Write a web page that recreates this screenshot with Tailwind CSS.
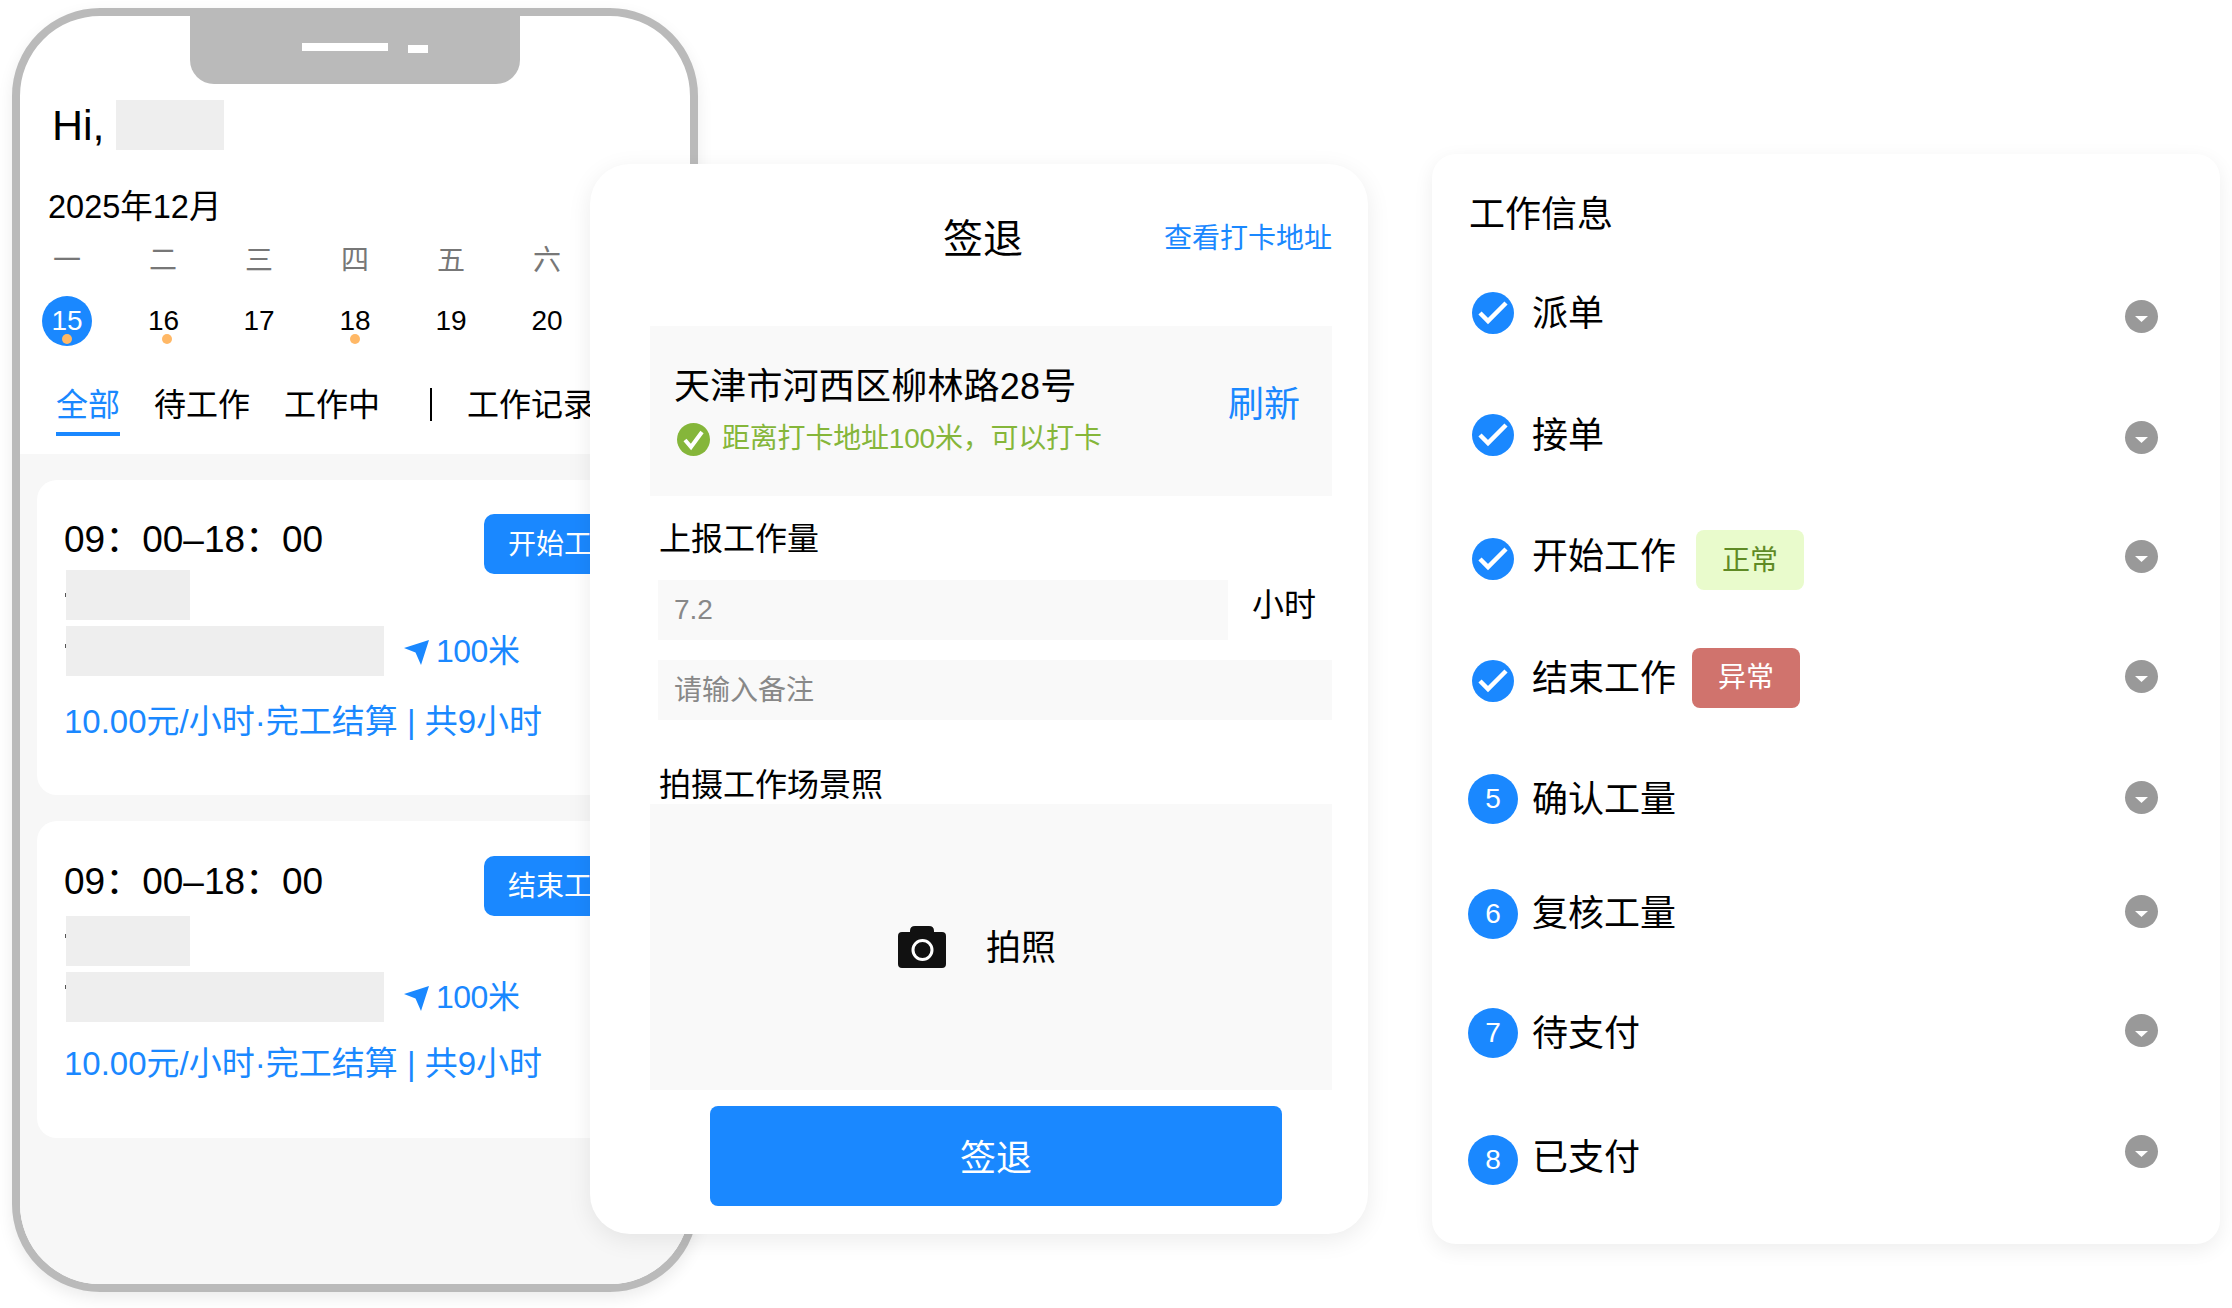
<!DOCTYPE html>
<html lang="zh-CN">
<head>
<meta charset="utf-8">
<title>工作信息</title>
<script src="https://cdn.jsdelivr.net/npm/@tailwindcss/browser@4"></script>
</head>
<body class="bg-white">
<div class="relative w-[2232px] h-[1308px] overflow-hidden bg-white text-black font-['Liberation_Sans','Noto_Sans_CJK_SC',sans-serif]">
  <div class="flex items-start pt-[8px] pl-[12px]">
    <!-- phone -->
    <section class="w-[686px] h-[1284px] shrink-0 border-[8px] border-[#bababa] rounded-[88px] overflow-hidden bg-white flex flex-col shadow-[0_6px_16px_rgba(0,0,0,0.08)]">
      <div class="ml-[170px] w-[330px] h-[68px] shrink-0 bg-[#bababa] rounded-b-[24px] flex items-start gap-[20px] pl-[112px] pt-[27px]">
        <span class="w-[86px] h-[8px] bg-white"></span>
        <span class="w-[20px] h-[8px] mt-[2px] bg-white"></span>
      </div>
      <div class="mt-[16px] h-[50px] shrink-0 pl-[32px] flex items-center gap-[11px]">
        <span class="text-[43px] leading-[50px]">Hi,</span>
        <span class="w-[108px] h-[50px] bg-[#eeeeee]"></span>
      </div>
      <div class="mt-[37px] h-[39px] shrink-0 pl-[28px] text-[32.500px] leading-[40px]">2025年12月</div>
      <div class="mt-[15px] h-[40px] shrink-0 flex -ml-[1px] text-[28px] leading-[40px] text-[#777777]">
        <span class="w-[96px] text-center">一</span>
        <span class="w-[96px] text-center">二</span>
        <span class="w-[96px] text-center">三</span>
        <span class="w-[96px] text-center">四</span>
        <span class="w-[96px] text-center">五</span>
        <span class="w-[96px] text-center">六</span>
      </div>
      <div class="mt-[15px] h-[50px] shrink-0 flex -ml-[1px] text-[28px] leading-[50px]">
        <span class="relative w-[96px] flex justify-center">
          <span class="w-[50px] h-[50px] rounded-full bg-[#1a88ff] text-white text-center">15</span>
          <span class="absolute left-[43px] top-[38px] w-[10px] h-[10px] rounded-full bg-[#ffb866]"></span>
        </span>
        <span class="relative w-[96px] text-center pl-[1px]">16<span class="absolute left-[47px] top-[38px] w-[10px] h-[10px] rounded-full bg-[#ffb866]"></span></span>
        <span class="w-[96px] text-center">17</span>
        <span class="relative w-[96px] text-center">18<span class="absolute left-[43px] top-[38px] w-[10px] h-[10px] rounded-full bg-[#ffb866]"></span></span>
        <span class="w-[96px] text-center">19</span>
        <span class="w-[96px] text-center">20</span>
      </div>
      <nav class="mt-[34px] h-[56px] shrink-0 pl-[36px] flex items-start text-[32px] leading-[50px] whitespace-nowrap">
        <span class="w-[64px] h-[56px] border-b-[4px] border-[#1a88ff] text-[#1a88ff] text-center">全部</span>
        <span class="ml-[34px]">待工作</span>
        <span class="ml-[34px]">工作中</span>
        <span class="ml-[50px] mt-[8px] w-[2px] h-[33px] bg-black"></span>
        <span class="ml-[35px]">工作记录</span>
      </nav>
      <div class="mt-[18px] flex-1 bg-[#f7f7f7] pt-[26px] pl-[17px] flex flex-col gap-[26px]">
        <article class="w-[640px] h-[315px] shrink-0 bg-white rounded-[20px] pt-[34px] pl-[28px]">
          <div class="h-[56px] flex items-start">
            <span class="-ml-[1px] w-[420px] text-[37px] leading-[52px] whitespace-nowrap">09：00–18：00</span>
            <span class="w-[160px] h-[60px] rounded-[10px] bg-[#1a88ff] text-white text-[28px] leading-[62px] pl-[24px]">开始工作</span>
          </div>
          <div class="flex items-center h-[50px]">
            <span class="w-[1px] h-[4px] bg-[#555555]"></span>
            <span class="w-[124px] h-[50px] bg-[#eeeeee]"></span>
          </div>
          <div class="mt-[6px] h-[50px] flex items-center">
            <span class="w-[1px] h-[4px] mb-[10px] bg-[#555555]"></span>
            <span class="w-[318px] h-[50px] bg-[#eeeeee]"></span>
            <svg class="ml-[20px] mt-[2px]" width="26" height="25" viewBox="0 0 26 25"><path fill="#1a88ff" d="M0 8 25 0 17 25 11.500 12.500Z"/></svg>
            <span class="ml-[6px] text-[32px] leading-[54px] text-[#1a88ff] tracking-[-0.5px]">100米</span>
          </div>
          <div class="mt-[26px] text-[33px] leading-[40px] text-[#1a88ff] whitespace-nowrap -ml-[1px]">10.00元/小时·完工结算 | 共9小时</div>
        </article>
        <article class="w-[640px] h-[317px] shrink-0 bg-white rounded-[20px] pt-[35px] pl-[28px]">
          <div class="h-[60px] flex items-start">
            <span class="-ml-[1px] w-[420px] text-[37px] leading-[52px] whitespace-nowrap">09：00–18：00</span>
            <span class="w-[160px] h-[60px] rounded-[10px] bg-[#1a88ff] text-white text-[28px] leading-[62px] pl-[24px]">结束工作</span>
          </div>
          <div class="flex items-center h-[50px]">
            <span class="w-[1px] h-[4px] mb-[10px] bg-[#555555]"></span>
            <span class="w-[124px] h-[50px] bg-[#eeeeee]"></span>
          </div>
          <div class="mt-[6px] h-[50px] flex items-center">
            <span class="w-[1px] h-[4px] mb-[20px] bg-[#555555]"></span>
            <span class="w-[318px] h-[50px] bg-[#eeeeee]"></span>
            <svg class="ml-[20px] mt-[2px]" width="26" height="25" viewBox="0 0 26 25"><path fill="#1a88ff" d="M0 8 25 0 17 25 11.500 12.500Z"/></svg>
            <span class="ml-[6px] text-[32px] leading-[54px] text-[#1a88ff] tracking-[-0.5px]">100米</span>
          </div>
          <div class="mt-[22px] text-[33px] leading-[40px] text-[#1a88ff] whitespace-nowrap -ml-[1px]">10.00元/小时·完工结算 | 共9小时</div>
        </article>
      </div>
    </section>

    <!-- right card -->
    <section class="ml-[734px] mt-[146px] w-[788px] h-[1090px] shrink-0 bg-white rounded-[24px] pt-[36px] shadow-[0_6px_20px_rgba(0,0,0,0.07)]">
      <h2 class="ml-[37px] text-[36px] leading-[50px] font-normal">工作信息</h2>

      <div class="mt-[43px] h-[60px] flex items-center">
        <span class="ml-[36px] w-[50px] flex justify-center"><svg width="42" height="42" viewBox="0 0 42 42"><circle cx="21" cy="21" r="21" fill="#1a88ff"/><path d="M8 21 16 29 34 11" fill="none" stroke="#fff" stroke-width="4.500"/></svg></span>
        <span class="ml-[14px] mt-[2px] text-[36px] leading-[50px]">派单</span>
        <span class="ml-auto mr-[62px] mt-[6px] w-[33px] h-[33px] rounded-full bg-[#999999] flex items-center justify-center"><svg class="mt-[6px]" width="13" height="6" viewBox="0 0 13 6"><path d="M0 0H13L6.500 6Z" fill="#fff"/></svg></span>
      </div>
      <div class="mt-[62px] h-[60px] flex items-center">
        <span class="ml-[36px] w-[50px] flex justify-center"><svg width="42" height="42" viewBox="0 0 42 42"><circle cx="21" cy="21" r="21" fill="#1a88ff"/><path d="M8 21 16 29 34 11" fill="none" stroke="#fff" stroke-width="4.500"/></svg></span>
        <span class="ml-[14px] mt-[2px] text-[36px] leading-[50px]">接单</span>
        <span class="ml-auto mr-[62px] mt-[4px] w-[33px] h-[33px] rounded-full bg-[#999999] flex items-center justify-center"><svg class="mt-[6px]" width="13" height="6" viewBox="0 0 13 6"><path d="M0 0H13L6.500 6Z" fill="#fff"/></svg></span>
      </div>
      <div class="mt-[64px] h-[60px] flex items-center">
        <span class="ml-[36px] w-[50px] flex justify-center"><svg width="42" height="42" viewBox="0 0 42 42"><circle cx="21" cy="21" r="21" fill="#1a88ff"/><path d="M8 21 16 29 34 11" fill="none" stroke="#fff" stroke-width="4.500"/></svg></span>
        <span class="ml-[14px] mb-[4px] text-[36px] leading-[50px]">开始工作</span>
        <span class="ml-[20px] mt-[2px] w-[108px] h-[60px] rounded-[8px] bg-[#e9fbcc] text-[#5f8a25] text-[28px] leading-[62px] text-center">正常</span>
        <span class="ml-auto mr-[62px] mb-[6px] w-[33px] h-[33px] rounded-full bg-[#999999] flex items-center justify-center"><svg class="mt-[6px]" width="13" height="6" viewBox="0 0 13 6"><path d="M0 0H13L6.500 6Z" fill="#fff"/></svg></span>
      </div>
      <div class="mt-[62px] h-[60px] flex items-center">
        <span class="ml-[36px] w-[50px] flex justify-center"><svg width="42" height="42" viewBox="0 0 42 42"><circle cx="21" cy="21" r="21" fill="#1a88ff"/><path d="M8 21 16 29 34 11" fill="none" stroke="#fff" stroke-width="4.500"/></svg></span>
        <span class="ml-[14px] mb-[4px] text-[36px] leading-[50px]">结束工作</span>
        <span class="ml-[16px] mb-[6px] w-[108px] h-[60px] rounded-[8px] bg-[#d0736d] text-white text-[28px] leading-[60px] text-center">异常</span>
        <span class="ml-auto mr-[62px] mb-[10px] w-[33px] h-[33px] rounded-full bg-[#999999] flex items-center justify-center"><svg class="mt-[6px]" width="13" height="6" viewBox="0 0 13 6"><path d="M0 0H13L6.500 6Z" fill="#fff"/></svg></span>
      </div>
      <div class="mt-[58px] h-[60px] flex items-center">
        <span class="ml-[36px] w-[50px] h-[50px] rounded-full bg-[#1a88ff] text-white text-[28px] leading-[50px] text-center">5</span>
        <span class="ml-[14px] mt-[2px] text-[36px] leading-[50px]">确认工量</span>
        <span class="ml-auto mr-[62px] mb-[4px] w-[33px] h-[33px] rounded-full bg-[#999999] flex items-center justify-center"><svg class="mt-[6px]" width="13" height="6" viewBox="0 0 13 6"><path d="M0 0H13L6.500 6Z" fill="#fff"/></svg></span>
      </div>
      <div class="mt-[55px] h-[60px] flex items-center">
        <span class="ml-[36px] w-[50px] h-[50px] rounded-full bg-[#1a88ff] text-white text-[28px] leading-[50px] text-center">6</span>
        <span class="ml-[14px] text-[36px] leading-[50px]">复核工量</span>
        <span class="ml-auto mr-[62px] mb-[6px] w-[33px] h-[33px] rounded-full bg-[#999999] flex items-center justify-center"><svg class="mt-[6px]" width="13" height="6" viewBox="0 0 13 6"><path d="M0 0H13L6.500 6Z" fill="#fff"/></svg></span>
      </div>
      <div class="mt-[59px] h-[60px] flex items-center">
        <span class="ml-[36px] w-[50px] h-[50px] rounded-full bg-[#1a88ff] text-white text-[28px] leading-[50px] text-center">7</span>
        <span class="ml-[14px] mt-[2px] text-[36px] leading-[50px]">待支付</span>
        <span class="ml-auto mr-[62px] mb-[5px] w-[33px] h-[33px] rounded-full bg-[#999999] flex items-center justify-center"><svg class="mt-[6px]" width="13" height="6" viewBox="0 0 13 6"><path d="M0 0H13L6.500 6Z" fill="#fff"/></svg></span>
      </div>
      <div class="mt-[67px] h-[60px] flex items-center">
        <span class="ml-[36px] w-[50px] h-[50px] rounded-full bg-[#1a88ff] text-white text-[28px] leading-[50px] text-center">8</span>
        <span class="ml-[14px] mb-[4px] text-[36px] leading-[50px]">已支付</span>
        <span class="ml-auto mr-[62px] mb-[18px] w-[33px] h-[33px] rounded-full bg-[#999999] flex items-center justify-center"><svg class="mt-[6px]" width="13" height="6" viewBox="0 0 13 6"><path d="M0 0H13L6.500 6Z" fill="#fff"/></svg></span>
      </div>
    </section>
  </div>

  <!-- overlapping sign-out dialog -->
  <section class="absolute left-[590px] top-[164px] w-[778px] h-[1070px] bg-white rounded-[40px] pt-[50px] shadow-[0_6px_24px_rgba(0,0,0,0.08)]">
    <header class="h-[50px] flex items-center">
      <h1 class="ml-[353px] w-[80px] text-[40px] leading-[52px] font-normal">签退</h1>
      <a class="ml-[141px] text-[28px] leading-[52px] text-[#1a88ff] whitespace-nowrap">查看打卡地址</a>
    </header>
    <div class="mt-[62px] ml-[60px] w-[682px] h-[170px] bg-[#f9f9f9] pl-[24px] pr-[32px] flex justify-between">
      <div class="pt-[36px]">
        <div class="text-[36px] leading-[50px] whitespace-nowrap tracking-[0.2px]">天津市河西区柳林路28号</div>
        <div class="mt-[7px] flex items-center h-[40px]">
          <svg class="ml-[3px]" width="33" height="33" viewBox="0 0 33 33"><circle cx="16.500" cy="16.500" r="16.500" fill="#85b63a"/><path d="M8 17 14 24 25 9" fill="none" stroke="#fff" stroke-width="4"/></svg>
          <span class="ml-[12px] text-[28px] leading-[40px] text-[#85b63a] whitespace-nowrap tracking-[-0.2px]">距离打卡地址100米，可以打卡</span>
        </div>
      </div>
      <span class="mt-[54px] text-[36px] leading-[50px] text-[#1a88ff]">刷新</span>
    </div>
    <div class="mt-[23px] ml-[69px] text-[32px] leading-[40px]">上报工作量</div>
    <div class="mt-[21px] ml-[68px] flex items-start">
      <div class="w-[570px] h-[60px] bg-[#f9f9f9] pl-[16px] text-[28px] leading-[60px] text-[#888888]">7.2</div>
      <span class="ml-[24px] text-[32px] leading-[50px]">小时</span>
    </div>
    <div class="mt-[20px] ml-[68px] w-[674px] h-[60px] bg-[#f9f9f9] pl-[16px] text-[28px] leading-[62px] text-[#888888]">请输入备注</div>
    <div class="mt-[45px] ml-[69px] h-[39px] text-[32px] leading-[40px]">拍摄工作场景照</div>
    <div class="ml-[60px] w-[682px] h-[286px] bg-[#f9f9f9] pl-[248px] flex items-center">
      <svg width="48" height="42" viewBox="0 0 48 42"><path fill="#111" d="M4 6H12V5Q12 0 17 0H31Q36 0 36 5V6H44Q48 6 48 10V38Q48 42 44 42H4Q0 42 0 38V10Q0 6 4 6Z"/><circle cx="24.500" cy="24" r="9.500" fill="none" stroke="#fff" stroke-width="3"/></svg>
      <span class="ml-[40px] mt-[2px] text-[35px] leading-[50px]">拍照</span>
    </div>
    <button class="mt-[16px] ml-[120px] w-[572px] h-[100px] rounded-[8px] bg-[#1a88ff] text-white text-[36px] leading-[100px] text-center pt-[3px]">签退</button>
  </section>
</div>
</body>
</html>
